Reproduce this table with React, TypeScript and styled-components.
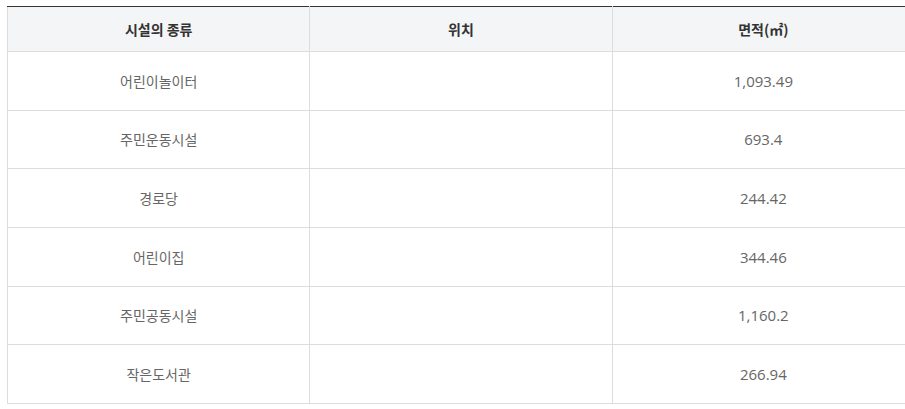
import React from "react";
import styled, { createGlobalStyle } from "styled-components";

const Global = createGlobalStyle`
  html, body { margin: 0; padding: 0; background: #fff; overflow: hidden; }
  body { font-family: "Open Sans", "Noto Sans CJK KR", sans-serif; }
`;

const Wrap = styled.div`
  padding: 6px 0 0 7px;
  width: 908px;
`;

const Table = styled.table`
  width: 908px;
  border-collapse: collapse;
  table-layout: fixed;
  border-top: 1px solid #333;
  border-left: 1px solid #ddd;
`;

const Th = styled.th`
  height: 44px;
  padding: 0;
  background: #f4f5f7;
  border-right: 1px solid #ddd;
  border-bottom: 1px solid #ddd;
  font-family: "Noto Sans CJK KR", sans-serif;
  font-size: 14px;
  font-weight: 700;
  color: #333;
  text-align: center;
  vertical-align: middle;
`;

const Td = styled.td<{ $num?: boolean }>`
  height: 57.67px;
  padding: 0;
  border-right: 1px solid #ddd;
  border-bottom: 1px solid #ddd;
  font-family: ${(p) => (p.$num ? '"Open Sans", "Noto Sans CJK KR", sans-serif' : '"Noto Sans CJK KR", sans-serif')};
  font-size: ${(p) => (p.$num ? "15px" : "14px")};
  font-weight: 400;
  color: #666;
  text-align: center;
  vertical-align: middle;
`;

const rows: [string, string][] = [
  ["어린이놀이터", "1,093.49"],
  ["주민운동시설", "693.4"],
  ["경로당", "244.42"],
  ["어린이집", "344.46"],
  ["주민공동시설", "1,160.2"],
  ["작은도서관", "266.94"],
];

export default function App() {
  return (
    <>
      <Global />
      <Wrap>
        <Table>
          <thead>
            <tr>
              <Th>시설의 종류</Th>
              <Th>위치</Th>
              <Th>면적(㎡)</Th>
            </tr>
          </thead>
          <tbody>
            {rows.map(([name, area]) => (
              <tr key={name}>
                <Td>{name}</Td>
                <Td></Td>
                <Td $num>{area}</Td>
              </tr>
            ))}
          </tbody>
        </Table>
      </Wrap>
    </>
  );
}
